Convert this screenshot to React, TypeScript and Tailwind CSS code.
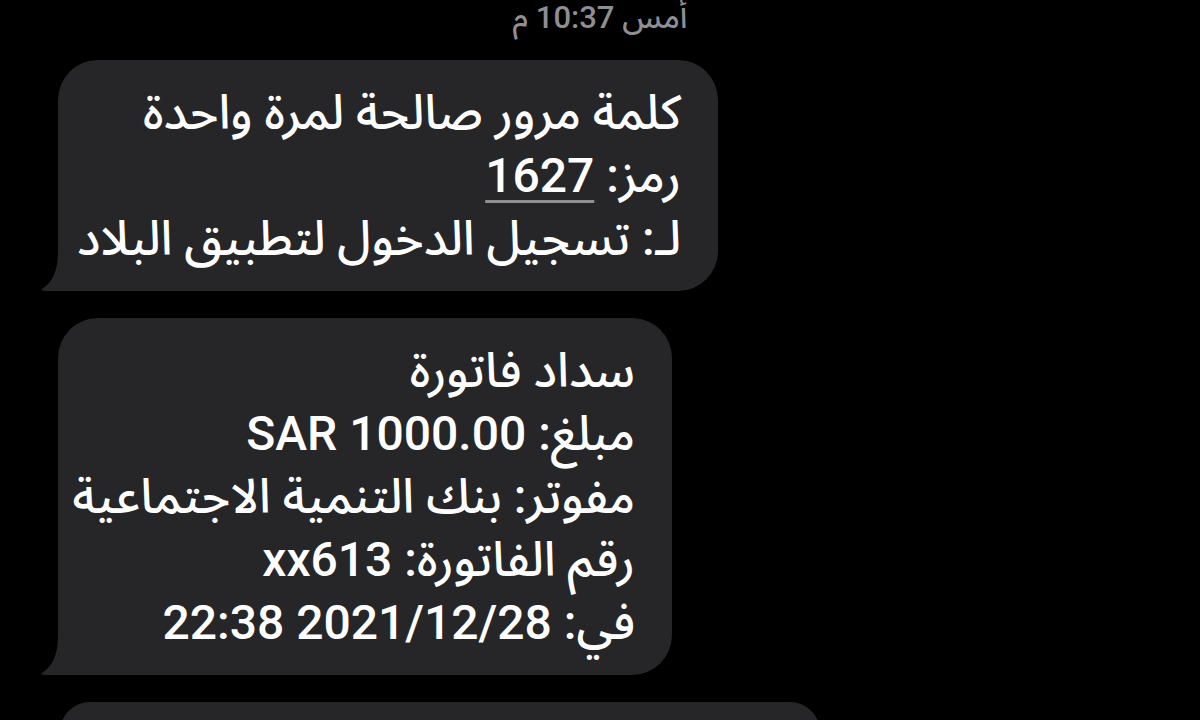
import React from "react";

function Tail() {
  return (
    <svg
      className="absolute left-[-17px] bottom-0"
      width="60"
      height="40"
      viewBox="0 0 60 40"
    >
      <path d="M17 0 C17 18 13 30 1 38 C0 39 1 40 3 40 L60 40 L60 0 Z" fill="#262629" />
    </svg>
  );
}

function Bubble({ width, children }: { width: string; children: React.ReactNode }) {
  return (
    <div className={`relative ${width}`}>
      <div className="relative z-10 rounded-[40px] bg-[#262629] pl-[30px] pr-[37px] py-[21px] text-right">
        {children}
      </div>
      <Tail />
    </div>
  );
}

export default function App() {
  const font = {
    fontFamily: '"Roboto", "Noto Sans Arabic", "DejaVu Sans", sans-serif',
  };
  return (
    <div className="w-[1200px] h-[720px] overflow-hidden bg-black" style={font}>
      <div className="flex justify-center h-[60px] pt-[1px]">
        <div dir="rtl" className="text-[31px] leading-[34px] text-[#8e8e93] font-medium whitespace-nowrap">
          أمس 10:37 م
        </div>
      </div>
      <div className="flex flex-col items-start pl-[58px] gap-[27px]">
        <Bubble width="w-[660px]">
          <div dir="rtl" className="text-white text-[48px] leading-[63px] font-medium whitespace-nowrap">
            <div>كلمة مرور صالحة لمرة واحدة</div>
            <div>
              رمز:{" "}
              <span className="underline decoration-[#8e8e93] decoration-[3px] underline-offset-[8px]">
                1627
              </span>
            </div>
            <div>لـ: تسجيل الدخول لتطبيق البلاد</div>
          </div>
        </Bubble>
        <Bubble width="w-[614px]">
          <div dir="rtl" className="text-white text-[48px] leading-[63px] font-medium whitespace-nowrap">
            <div>سداد فاتورة</div>
            <div>مبلغ: SAR 1000.00</div>
            <div>مفوتر: بنك التنمية الاجتماعية</div>
            <div>رقم الفاتورة: xx613</div>
            <div>في: 2021/12/28 22:38</div>
          </div>
        </Bubble>
        <div className="w-[760px] h-[60px] rounded-[40px] bg-[#262629] ml-[2px]" />
      </div>
    </div>
  );
}
